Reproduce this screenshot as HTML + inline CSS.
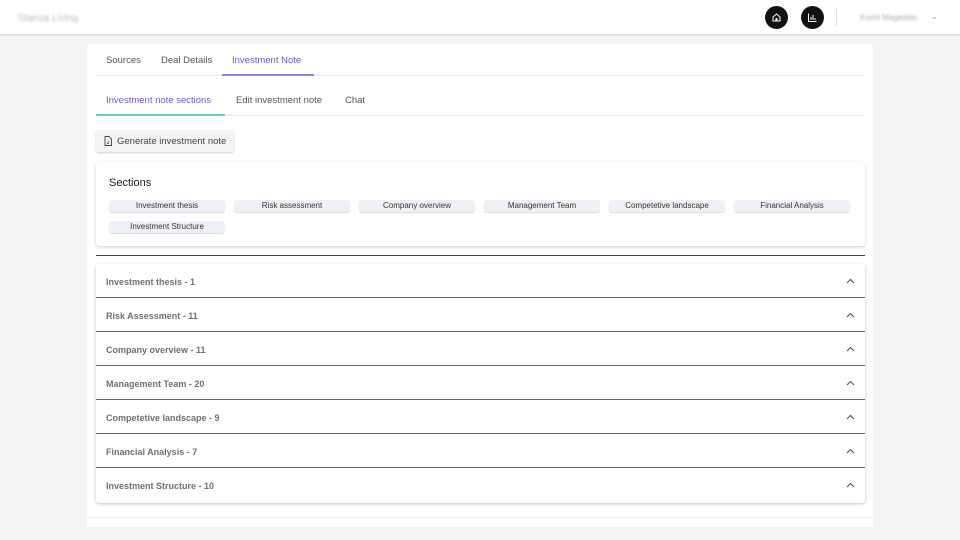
<!DOCTYPE html><html><head><style>
body{margin:0;width:960px;height:540px;background:#f4f4f2;font-family:"Liberation Sans",sans-serif;position:relative;overflow:hidden}
.a{position:absolute}
.hdr{left:0;top:0;width:960px;height:34px;background:#fff;box-shadow:0 1px 2px rgba(0,0,0,.12)}
.card{left:87px;top:44px;width:786px;height:483px;background:#fff;border-radius:3px}
.t{font-size:9.5px;color:#555}
.chip{position:absolute;height:12px;background:#eef1f5;border-radius:3px;box-shadow:0 1px 1px rgba(0,0,0,.15);font-size:8px;color:#333;text-align:center;line-height:12px;width:116px}
.row{position:absolute;left:0;width:769px;height:33px;border-bottom:1px solid #666;font-size:9px;color:#707070;font-weight:bold}
.row span{position:absolute;left:10px;top:13px}
.row svg{position:absolute;right:10px;top:14px}
</style></head><body>
<div class="a hdr"></div>
<div class="a" style="left:18px;top:13px;font-size:10px;color:#bbb;filter:blur(1.2px)">Stanza Living</div>
<div class="a" style="left:765px;top:6px;width:23px;height:23px;border-radius:50%;background:#111"></div>
<svg class="a" style="left:771px;top:12px" width="11" height="11" viewBox="0 0 11 11"><path d="M2 5L5.5 2L9 5V9H2Z" fill="none" stroke="#fff" stroke-width="1"/><rect x="4.5" y="6" width="2" height="3" fill="#fff"/></svg>
<div class="a" style="left:801px;top:6px;width:23px;height:23px;border-radius:50%;background:#111"></div>
<svg class="a" style="left:807px;top:12px" width="11" height="11" viewBox="0 0 11 11"><path d="M1.5 1.5V9.5H9.5M4 8V5M6 8V3M8 8V6" fill="none" stroke="#fff" stroke-width="1"/></svg>
<div class="a" style="left:836px;top:10px;width:1px;height:16px;background:#ddd"></div>
<div class="a" style="left:860px;top:13px;font-size:8px;color:#aaa;filter:blur(1px)">Kuchi Magadalu</div>
<div class="a" style="left:931px;top:12px;font-size:8px;color:#aaa">⌄</div>
<div class="a card"></div>
<div class="a t" style="left:106px;top:55px">Sources</div>
<div class="a t" style="left:161px;top:55px">Deal Details</div>
<div class="a t" style="left:232px;top:55px;color:#6a5bdc">Investment Note</div>
<div class="a" style="left:96px;top:75px;width:769px;height:1px;background:#e4e4e4"></div>
<div class="a" style="left:222px;top:74px;width:92px;height:2px;background:#8c82e6"></div>
<div class="a t" style="left:106px;top:95px;color:#6a5bdc">Investment note sections</div>
<div class="a t" style="left:236px;top:95px">Edit investment note</div>
<div class="a t" style="left:345px;top:95px">Chat</div>
<div class="a" style="left:96px;top:115px;width:769px;height:1px;background:#e4e4e4"></div>
<div class="a" style="left:96px;top:114px;width:129px;height:2px;background:#6fcfb0"></div>
<div class="a" style="left:96px;top:130px;width:138px;height:22px;background:#f4f4f4;border-radius:3px;box-shadow:0 1px 2px rgba(0,0,0,.2)"></div>
<svg class="a" style="left:104px;top:136px" width="8" height="10" viewBox="0 0 8 10"><path d="M1 .5H5L7.5 3V9.5H1Z" fill="none" stroke="#444" stroke-width=".9"/><path d="M3 6h2.5M3 7.5h2" stroke="#444" stroke-width=".7"/></svg>
<div class="a t" style="left:117px;top:136px;color:#444">Generate investment note</div>
<div class="a" style="left:96px;top:162px;width:769px;height:84px;background:#fff;border-radius:3px;box-shadow:0 1px 3px rgba(0,0,0,.2)">
<div class="a" style="left:13px;top:15px;font-size:11px;color:#222">Sections</div>
<div class="chip" style="left:13px;top:38px">Investment thesis</div>
<div class="chip" style="left:138px;top:38px">Risk assessment</div>
<div class="chip" style="left:263px;top:38px">Company overview</div>
<div class="chip" style="left:388px;top:38px">Management Team</div>
<div class="chip" style="left:513px;top:38px">Competetive landscape</div>
<div class="chip" style="left:638px;top:38px">Financial Analysis</div>
<div class="chip" style="left:13px;top:59px">Investment Structure</div>
</div>
<div class="a" style="left:96px;top:255px;width:769px;height:1px;background:#444"></div>
<div class="a" style="left:96px;top:264px;width:769px;height:239px;background:#fff;box-shadow:0 1px 3px rgba(0,0,0,.25);border-radius:3px">
<div class="row" style="top:0"><span>Investment thesis - 1</span><svg width="9" height="6" viewBox="0 0 9 6"><path d="M1 5L4.5 1.5L8 5" fill="none" stroke="#555" stroke-width="1.1"/></svg></div>
<div class="row" style="top:34px"><span>Risk Assessment - 11</span><svg width="9" height="6" viewBox="0 0 9 6"><path d="M1 5L4.5 1.5L8 5" fill="none" stroke="#555" stroke-width="1.1"/></svg></div>
<div class="row" style="top:68px"><span>Company overview - 11</span><svg width="9" height="6" viewBox="0 0 9 6"><path d="M1 5L4.5 1.5L8 5" fill="none" stroke="#555" stroke-width="1.1"/></svg></div>
<div class="row" style="top:102px"><span>Management Team - 20</span><svg width="9" height="6" viewBox="0 0 9 6"><path d="M1 5L4.5 1.5L8 5" fill="none" stroke="#555" stroke-width="1.1"/></svg></div>
<div class="row" style="top:136px"><span>Competetive landscape - 9</span><svg width="9" height="6" viewBox="0 0 9 6"><path d="M1 5L4.5 1.5L8 5" fill="none" stroke="#555" stroke-width="1.1"/></svg></div>
<div class="row" style="top:170px"><span>Financial Analysis - 7</span><svg width="9" height="6" viewBox="0 0 9 6"><path d="M1 5L4.5 1.5L8 5" fill="none" stroke="#555" stroke-width="1.1"/></svg></div>
<div class="row" style="top:204px;border-bottom:none"><span>Investment Structure - 10</span><svg width="9" height="6" viewBox="0 0 9 6"><path d="M1 5L4.5 1.5L8 5" fill="none" stroke="#555" stroke-width="1.1"/></svg></div>
</div>
<div class="a" style="left:87px;top:517px;width:786px;height:1px;background:#eee"></div>
</body></html>
